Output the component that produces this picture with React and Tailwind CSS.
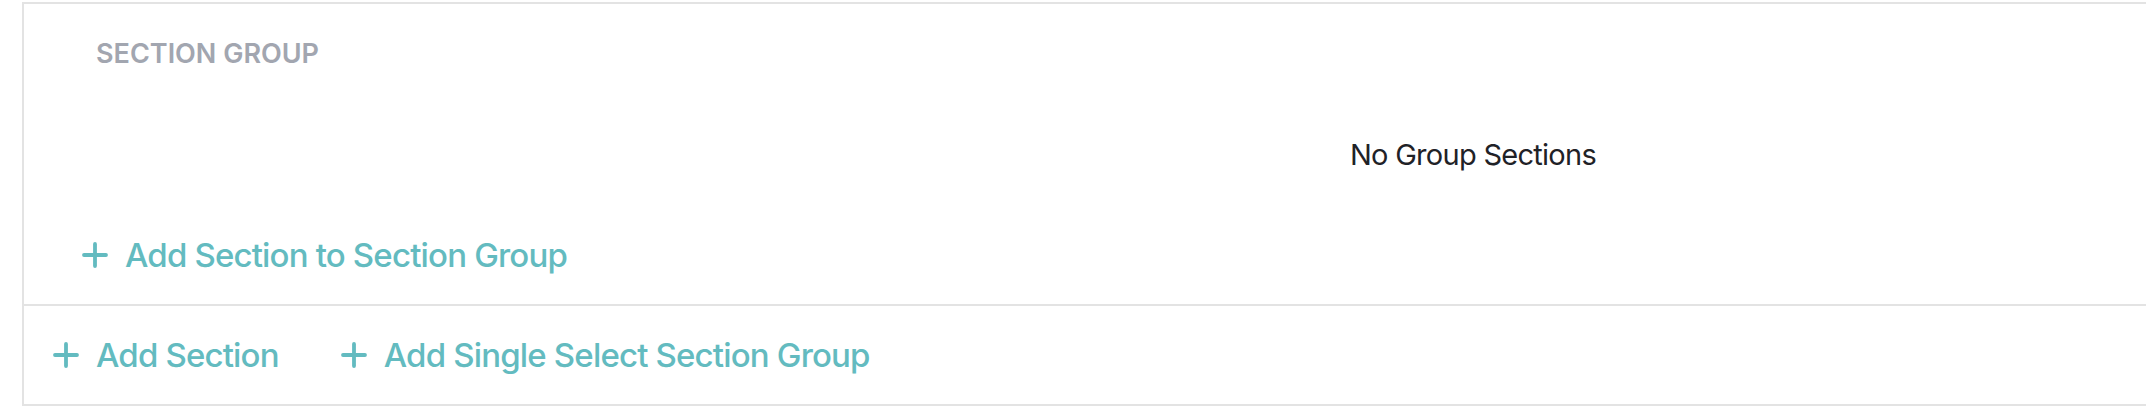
import React from "react";

function PlusIcon() {
  return (
    <svg
      viewBox="0 0 26 26"
      className="w-[26px] h-[26px] shrink-0"
      fill="none"
      stroke="currentColor"
      strokeWidth="3.8"
      strokeLinecap="round"
    >
      <path d="M13 2v22M2 13h22" />
    </svg>
  );
}

function AddButton({ label }) {
  return (
    <button className="flex items-center gap-[17px] text-[#63bbc0] text-[33px] leading-[40px] tracking-[-0.025em] font-medium">
      <PlusIcon />
      <span>{label}</span>
    </button>
  );
}

function App() {
  return (
    <div
      className="w-full h-[420px] bg-white overflow-hidden pt-[2px] pl-[22px]"
      style={{ fontFamily: "Inter, 'Noto Sans', sans-serif" }}
    >
      <div className="w-[2900px] border-l-2 border-t-2 border-b-2 border-[#e3e3e3]">
        {/* section group */}
        <div className="h-[300px] px-[58px] pt-[35px] flex flex-col">
          <div className="pl-[14px] text-[27px] leading-[30px] font-semibold text-[#a2a6b0]">
            SECTION GROUP
          </div>
          <div className="mt-[66px] text-center text-[29px] leading-[40px] tracking-[-0.025em] text-[#1f2227]">
            No Group Sections
          </div>
          <div className="mt-[60px]">
            <AddButton label="Add Section to Section Group" />
          </div>
        </div>
        <div className="h-[100px] border-t-2 border-[#e3e3e3] pl-[29px] flex items-center gap-[62px]">
          <AddButton label="Add Section" />
          <AddButton label="Add Single Select Section Group" />
        </div>
      </div>
    </div>
  );
}

export default App;
